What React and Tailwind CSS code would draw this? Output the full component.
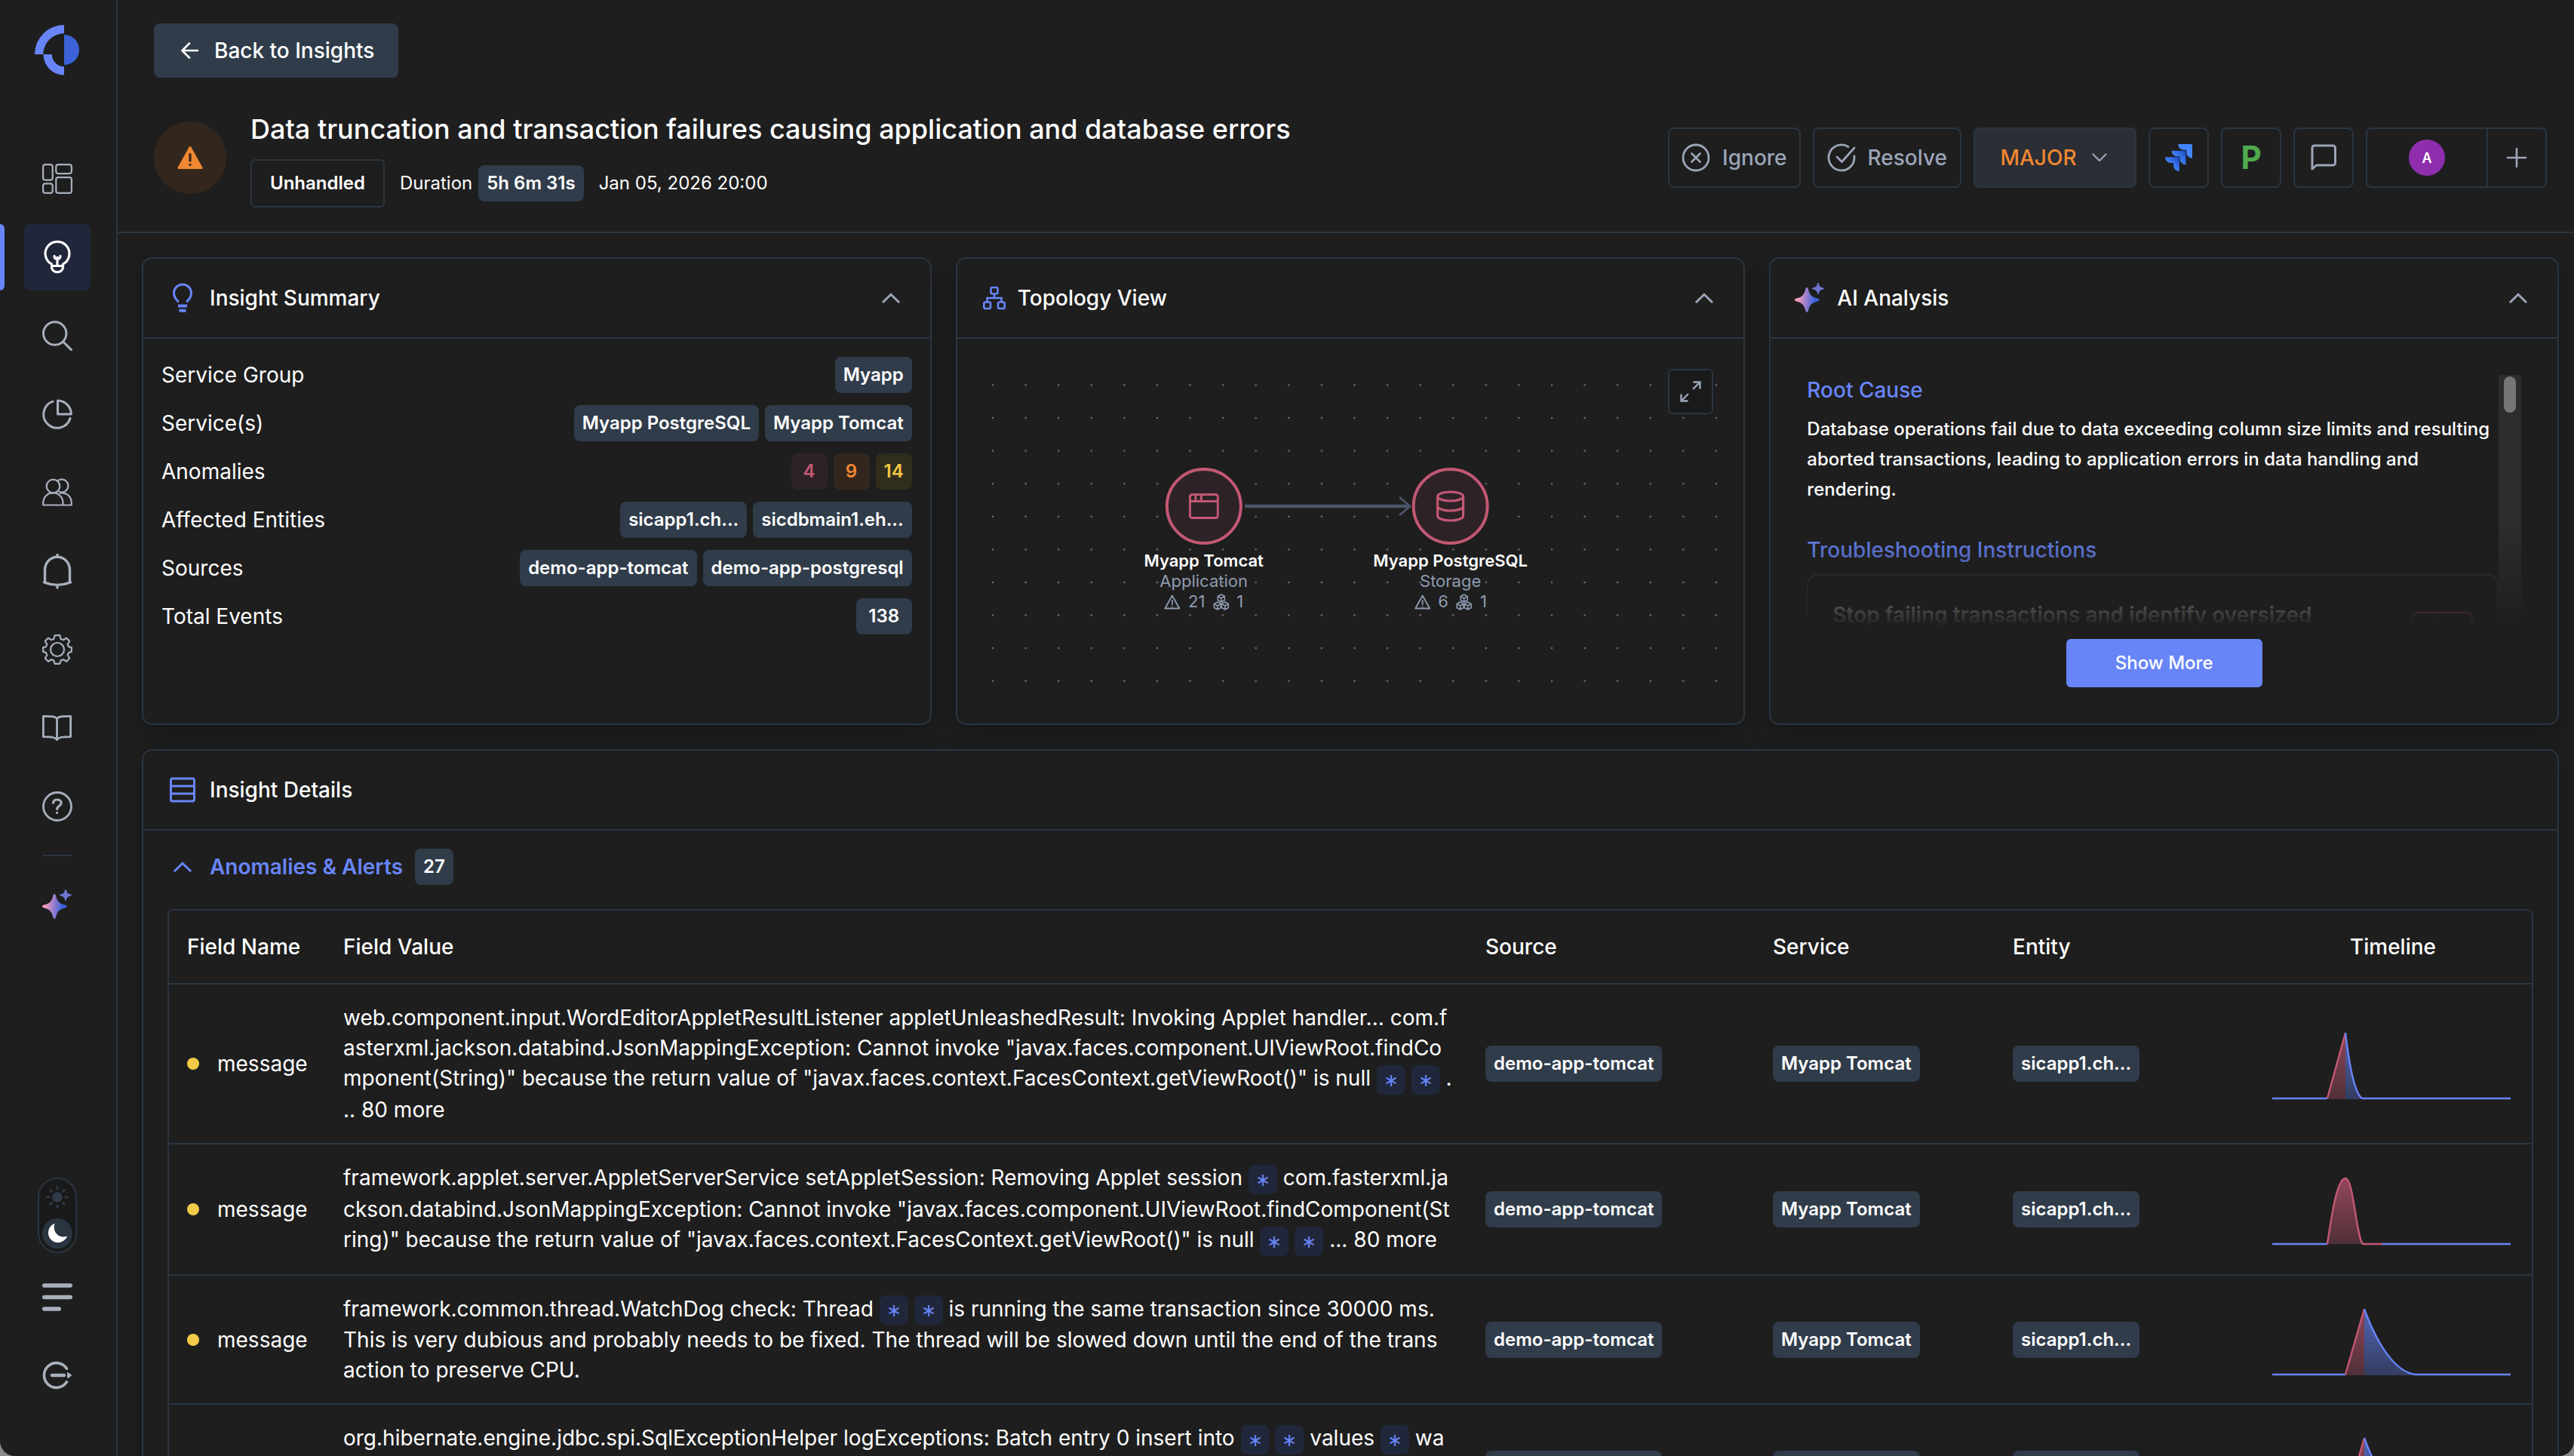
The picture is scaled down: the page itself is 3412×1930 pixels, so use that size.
import { Fragment, useState } from "react";
import clsx from "clsx";

const NAV_ICON = "size-10 shrink-0 fill-none stroke-current";

const SparkleIcon = ({ id, className }) => (
  <svg viewBox="0 0 40 40" className={className}>
    <defs>
      <linearGradient id={id} x1="0" y1="0.45" x2="1" y2="0.55">
        <stop offset="0.1" stopColor="#fb9dbb" />
        <stop offset="0.8" stopColor="#3d63de" />
      </linearGradient>
    </defs>
    <path
      fill={`url(#${id})`}
      d="M16.2 6c.9 0 1.4.7 1.8 2.2 1.6 7.2 4.500 10.500 12 12.400 1.700.4 2.700.9 2.700 1.900s-1 1.500-2.700 1.900c-7.500 1.900-10.400 5.200-12 12.400-.4 1.500-.9 2.200-1.800 2.200s-1.400-.7-1.800-2.200c-1.600-7.200-4.500-10.500-12-12.400-1.600-.4-2.400-.9-2.400-1.900s.8-1.500 2.400-1.900c7.500-1.900 10.400-5.200 12-12.400C14.800 6.700 15.300 6 16.200 6Z"
    />
    <path
      fill="#6f74d3"
      d="M31 0c.6 0 .9.500 1 1.200.8 3.200 1.800 4.200 5.500 5.200 1.200.3 1.700.6 1.700 1.100s-.5.8-1.700 1.100c-3.700 1-4.700 2-5.500 5.200-.1.700-.4 1.200-1 1.200s-.9-.5-1-1.200c-.8-3.200-1.800-4.200-5.500-5.200-1.200-.3-1.700-.6-1.700-1.100s.5-.8 1.700-1.100c3.700-1 4.700-2 5.500-5.200.1-.7.400-1.200 1-1.200Z"
    />
  </svg>
);

const Logo = () => (
  <svg viewBox="0 0 60 68" className="h-[68px] w-[60px]">
    <path d="M39 0v11.300A27.700 27.700 0 0 0 11.300 39H0A39 39 0 0 1 39 0Z" fill="#6885f8" />
    <path d="M11.500 39H22.800A16.200 16.200 0 0 0 39 55.200v11.300A27.500 27.500 0 0 1 11.500 39Z" fill="#6885f8" />
    <path d="M39 13a20 20 0 0 1 0 40Z" fill="#3b62d8" />
  </svg>
);

const navItems = [
  {
    label: "Dashboard",
    icon: (
      <svg viewBox="0 0 40 40" className={NAV_ICON} strokeWidth="2.2">
        <rect x="1.100" y="1.100" width="12.600" height="20.600" rx="3" />
        <rect x="18.300" y="1.100" width="20.600" height="12" rx="3" />
        <rect x="1.100" y="26.300" width="12.600" height="12.600" rx="3" />
        <rect x="18.300" y="18.100" width="20.600" height="20.800" rx="3" />
      </svg>
    ),
  },
  {
    label: "Insights",
    active: true,
    icon: (
      <svg viewBox="0 0 40 40" className={clsx(NAV_ICON, "overflow-visible")} strokeWidth="3.2" strokeLinecap="round" strokeLinejoin="round">
        <path d="M12.500 31.500v-2.300a15.900 15.900 0 1 1 15 0v2.300" />
        <path d="M12.500 31.500h15v1.800a7 6 0 0 1-15 0ZM20 31v-11M16 18.300c0 2.600 1.500 4 4 4s4-1.400 4-4" />
      </svg>
    ),
  },
  {
    label: "Search",
    icon: (
      <svg viewBox="0 0 40 40" className={NAV_ICON} strokeWidth="3" strokeLinecap="round">
        <circle cx="16.700" cy="17" r="15.200" />
        <path d="m27.800 28 10.600 10.600" />
      </svg>
    ),
  },
  {
    label: "Reports",
    icon: (
      <svg viewBox="0 0 40 40" className={NAV_ICON} strokeWidth="3" strokeLinecap="round" strokeLinejoin="round">
        <path d="M20.500 2v18h17.800A18 18 0 0 0 20.500 2Z" />
        <path d="M14 3.200A18 18 0 1 0 37 25.500" />
      </svg>
    ),
  },
  {
    label: "Users",
    icon: (
      <svg viewBox="0 0 40 40" className={NAV_ICON} strokeWidth="2.200" strokeLinejoin="round">
        <circle cx="14.500" cy="11.500" r="8.800" />
        <path d="M20 4.600a8.600 8.600 0 1 1 1.500 13.800M1.200 36.500V34c0-8 5.500-13.600 13.200-13.600S27.500 26 27.500 34v2.500ZM23 20.500c9.500-1 15.800 4.500 15.800 13.500v2.500H27.500" />
      </svg>
    ),
  },
  {
    label: "Alerts",
    icon: (
      <svg viewBox="0 0 40 40" className={clsx(NAV_ICON, "overflow-visible")} strokeWidth="3.400" strokeLinecap="round" strokeLinejoin="round">
        <path d="M20-1.500v2.500M20 40v2M3.500 34.700V18.500C3.500 9 10.500 1.300 20 1.300S36.500 9 36.500 18.500v16.200M2.500 34.900c11 4.400 24 4.400 35 0" />
      </svg>
    ),
  },
  {
    label: "Settings",
    icon: (
      <svg viewBox="0 0 40 40" className={NAV_ICON} strokeWidth="2.200" strokeLinejoin="round">
        <circle cx="20" cy="20" r="9" />
        <path d="M16.600 1.200h6.800l1.200 4.700 3.300 1.400 4.200-2.500 4.100 4.100-2.500 4.200 1.400 3.300 3.700.6v6l-3.700 1.100-1.400 3.200 2.500 4.200-4.100 4.300-4.200-2.600-3.300 1.400-1.200 4.200h-6.800l-1.200-4.200-3.300-1.400-4.200 2.600-4.100-4.300 2.500-4.200-1.400-3.200-3.700-1.100v-6l3.700-.6 1.400-3.300-2.500-4.200 4.100-4.100 4.200 2.500 3.300-1.400Z" />
      </svg>
    ),
  },
  {
    label: "Docs",
    icon: (
      <svg viewBox="0 0 40 40" className={NAV_ICON} strokeWidth="2.800" strokeLinejoin="round">
        <path d="M19.500 7.500C17 5 13.500 4.300 1.400 4.400v27.200c11 0 15.600.4 18.100 4 2.500-3.600 7-4 18.100-4V4.400C25.500 4.300 22 5 19.500 7.500ZM19.500 7.500v28" />
      </svg>
    ),
  },
  {
    label: "Help",
    icon: (
      <svg viewBox="0 0 40 40" className={NAV_ICON} strokeWidth="2.800" strokeLinecap="round">
        <circle cx="20" cy="20" r="18.500" />
        <path d="M14.500 15.200c.4-2.700 2.400-4.200 5.300-4.200 3.200 0 5.400 1.800 5.400 4.400 0 3.600-5.600 4.200-5.600 8.100M19.600 28.300v.2" strokeWidth="3.200" />
      </svg>
    ),
  },
];

const NavButton = ({ label, active, children }) => (
  <button
    aria-label={label}
    className={clsx(
      "flex size-[88px] items-center justify-center rounded-lg",
      active ? "bg-[#20273a] text-white" : "text-[#a8b0bd]"
    )}
  >
    {children}
  </button>
);

const ThemeToggle = () => {
  const [dark, setDark] = useState(true);
  return (
    <button
      role="switch"
      aria-checked={dark}
      aria-label="Dark theme"
      onClick={() => setDark((prev) => !prev)}
      className="flex h-[100px] w-[52px] flex-col items-center justify-between rounded-full border-2 border-[#2a3541] bg-[#191919] py-1"
    >
      <span className="flex size-10 items-center justify-center">
        <svg viewBox="0 0 30 30" className="size-[30px] text-[#303c4a]" stroke="currentColor" strokeWidth="2.600" strokeLinecap="round">
          <circle cx="15" cy="15" r="5.500" fill="currentColor" />
          <path d="M15 1.300v3M15 25.700v3M1.300 15h3M25.700 15h3M5.300 5.300l2.200 2.200M22.500 22.500l2.200 2.200M24.700 5.300l-2.200 2.200M7.500 22.500l-2.200 2.200" />
        </svg>
      </span>
      <span className="flex size-10 items-center justify-center rounded-full bg-[#2a3541]">
        <svg viewBox="0 0 26 26" className="size-[26px] fill-white">
          <path d="M9.500.5C8 4 8.500 9.500 12 13.500c3.500 3.800 8.500 5 13.200 3.200.6-.2.8.200.6.800A13 13 0 1 1 8.700.2c.6-.3 1-.2.8.3Z" />
        </svg>
      </span>
    </button>
  );
};

const Sidebar = () => (
  <nav className="relative flex w-[156px] shrink-0 flex-col border-r-2 border-[#2a3541] pl-8">
    <div className="ml-3.5 mt-[33px]">
      <Logo />
    </div>
    <div className="mt-23 flex flex-col gap-4">
      {navItems.map((item) => (
        <div key={item.label} className="relative">
          {item.active && <span className="absolute inset-y-0 -left-8 w-1.5 rounded-r-lg bg-[#6885f8]" />}
          <NavButton label={item.label} active={item.active}>
            {item.icon}
          </NavButton>
        </div>
      ))}
    </div>
    <hr className="ml-6 mt-5 w-10 border-t-2 border-[#2a3541]" />
    <div className="mt-5">
      <NavButton label="AI assistant">
        <SparkleIcon id="nav-sparkle" className="size-10" />
      </NavButton>
    </div>
    <div className="mt-auto pb-[63px]">
      <div className="flex w-[88px] flex-col items-center gap-[15px]">
        <ThemeToggle />
        <NavButton label="Expand menu">
          <svg viewBox="0 0 40 40" className={NAV_ICON} strokeWidth="5.600" strokeLinecap="round">
            <path d="M2.800 4h34.400M2.800 19.500h34.400M2.800 35h19.400" />
          </svg>
        </NavButton>
        <NavButton label="Log out">
          <svg viewBox="0 0 40 40" className={NAV_ICON} strokeWidth="3.600" strokeLinecap="round">
            <path d="M32.500 11.200A16.300 16.300 0 1 0 32.500 28.800" />
            <path d="M13 20h16" strokeWidth="4.600" />
            <path d="m34 17 4 3-4 3Z" fill="currentColor" strokeWidth="2" strokeLinejoin="round" />
          </svg>
        </NavButton>
      </div>
    </div>
  </nav>
);

const Badge = ({ children, className = "bg-[#303c4a] text-white" }) => (
  <span
    className={clsx(
      "inline-flex h-12 min-w-12 items-center justify-center whitespace-nowrap rounded-lg px-[11px] text-[24px] font-semibold",
      className
    )}
  >
    {children}
  </span>
);

const Chevron = ({ className }) => (
  <svg viewBox="0 0 24 14" className={clsx("h-[14px] w-6 fill-none stroke-current", className)} strokeWidth="3" strokeLinecap="round" strokeLinejoin="round">
    <path d="m1.800 12.200 10.200-10 10.200 10" />
  </svg>
);

const HEADER_BUTTON = "flex h-20 items-center justify-center rounded-lg border-2 border-[#2a3541]";

const Header = () => (
  <header className="border-b-2 border-[#2a3541] pb-8 pl-12 pr-9 pt-[31px]">
    <button className="flex h-[72px] items-center gap-5 rounded-lg bg-[#303c4a] pl-[34px] pr-8 text-[28px] font-medium">
      <svg viewBox="0 0 26 24" className="h-6 w-[26px] fill-none stroke-current" strokeWidth="2.600" strokeLinecap="round" strokeLinejoin="round">
        <path d="M24 12H4M13 2.500 3.500 12l9.500 9.500" />
      </svg>
      Back to Insights
    </button>
    <div className="mt-10 flex items-center justify-between">
      <div className="flex items-center gap-8">
        <span className="flex size-24 items-center justify-center rounded-full bg-[#33271d]">
          <svg viewBox="0 0 34 32" className="h-8 w-[34px]">
            <path d="M17 2.500 32 29.500H2Z" fill="#f08732" stroke="#f08732" strokeWidth="3" strokeLinejoin="round" />
            <path d="M17 11.500v8.500M17 25.200v.2" stroke="#33271d" strokeWidth="3.200" strokeLinecap="round" />
          </svg>
        </span>
        <div className="flex flex-col gap-3">
          <h1 className="text-[36px] font-medium leading-[56px]">
            Data truncation and transaction failures causing application and database errors
          </h1>
          <div className="flex items-center gap-5 text-[24px]">
            <span className="flex h-16 items-center rounded-md border-2 border-[#2a3541] px-6 font-semibold">Unhandled</span>
            <span className="flex items-center gap-2">
              Duration
              <Badge>5h 6m 31s</Badge>
            </span>
            <span>Jan 05, 2026 20:00</span>
          </div>
        </div>
      </div>
      <div className="flex items-center gap-4 text-[28px] font-medium text-[#9ba5b7]">
        <button className={clsx(HEADER_BUTTON, "gap-4 px-4")}>
          <svg viewBox="0 0 38 38" className="size-[38px] fill-none stroke-current" strokeWidth="2.800" strokeLinecap="round">
            <circle cx="19" cy="19" r="17" />
            <path d="m13.500 13.500 11 11M24.500 13.500l-11 11" />
          </svg>
          Ignore
        </button>
        <button className={clsx(HEADER_BUTTON, "gap-4 px-[17px]")}>
          <svg viewBox="0 0 38 38" className="size-[38px] fill-none stroke-current" strokeWidth="2.800" strokeLinecap="round" strokeLinejoin="round">
            <path d="M28 4.500A17 17 0 1 0 36 19v-2" />
            <path d="m13 18 6.500 6.500L36 6" />
          </svg>
          Resolve
        </button>
        <button className={clsx(HEADER_BUTTON, "w-[216px] gap-5 bg-[#2b2e34] pr-1 text-[#f08732]")}>
          MAJOR
          <svg viewBox="0 0 20 12" className="h-3 w-5 fill-none stroke-[#9ba5b7]" strokeWidth="2.200" strokeLinecap="round" strokeLinejoin="round">
            <path d="m1.500 1.500 8.500 8.500 8.500-8.500" />
          </svg>
        </button>
        <button aria-label="Jira" className={clsx(HEADER_BUTTON, "w-20")}>
          <svg viewBox="0 0 24 24" className="size-9">
            <defs>
              <linearGradient id="jira-shade" x1="0.95" y1="0.1" x2="0.4" y2="0.6">
                <stop offset="0" stopColor="#1e50c8" />
                <stop offset="1" stopColor="#4385fb" />
              </linearGradient>
            </defs>
            <path fill="#4385fb" d="M23.013 0H11.455a5.215 5.215 0 0 0 5.215 5.215h2.129v2.057A5.215 5.215 0 0 0 24 12.483V1.005A1.001 1.001 0 0 0 23.013 0Z" />
            <path fill="url(#jira-shade)" d="M17.294 5.757H5.736a5.215 5.215 0 0 0 5.215 5.214h2.129v2.058a5.218 5.218 0 0 0 5.215 5.214V6.758a1.001 1.001 0 0 0-1.001-1.001Z" />
            <path fill="url(#jira-shade)" d="M11.571 11.513H0a5.218 5.218 0 0 0 5.232 5.215h2.130v2.057A5.215 5.215 0 0 0 12.575 24V12.518a1.005 1.005 0 0 0-1.004-1.005Z" />
          </svg>
        </button>
        <button aria-label="PagerDuty" className={clsx(HEADER_BUTTON, "w-20 text-[42px] font-bold leading-none text-[#4faa4b]")}>
          P
        </button>
        <button aria-label="Comments" className={clsx(HEADER_BUTTON, "w-20")}>
          <svg viewBox="0 0 36 36" className="size-9 fill-none stroke-current" strokeWidth="3" strokeLinejoin="round">
            <path d="M3 33V5a3 3 0 0 1 3-3h24.500a3 3 0 0 1 3 3v20a3 3 0 0 1-3 3H8.500Z" />
          </svg>
        </button>
        <div className="flex h-20 w-[240px] rounded-lg border-2 border-[#2a3541]">
          <button aria-label="Assignee" className="flex flex-1 items-center justify-center">
            <span className="flex size-12 items-center justify-center rounded-full bg-[#8e2ead] text-[18px] font-semibold text-white">A</span>
          </button>
          <button aria-label="Add assignee" className="flex w-[78px] items-center justify-center border-l-2 border-[#2a3541]">
            <svg viewBox="0 0 28 28" className="size-7 fill-none stroke-current" strokeWidth="2.600" strokeLinecap="round">
              <path d="M14 2v24M2 14h24" />
            </svg>
          </button>
        </div>
      </div>
    </div>
  </header>
);

const Card = ({ icon, title, collapsible = true, className, children }) => (
  <section className={clsx("flex min-w-0 flex-col border-2 border-[#2a3541] bg-[#1e1e1e] shadow-[0_12px_28px_rgba(0,0,0,0.22)]", className)}>
    <div className="flex h-[106px] items-center gap-[18px] border-b-2 border-[#2a3541] pl-[34px] pr-10">
      {icon}
      <h2 className="flex-1 text-[28px] font-medium">{title}</h2>
      {collapsible && (
        <button aria-label={`Collapse ${title}`} className="text-[#9ba5b7]">
          <Chevron />
        </button>
      )}
    </div>
    {children}
  </section>
);

const summaryRows = [
  { label: "Service Group", badges: ["Myapp"] },
  { label: "Service(s)", badges: ["Myapp PostgreSQL", "Myapp Tomcat"] },
  {
    label: "Anomalies",
    badges: ["4", "9", "14"],
    tones: ["bg-[#2d2327] text-[#c35874]", "bg-[#33271d] text-[#f08732]", "bg-[#302d1d] text-[#f2c744]"],
  },
  { label: "Affected Entities", badges: ["sicapp1.ch...", "sicdbmain1.eh..."] },
  { label: "Sources", badges: ["demo-app-tomcat", "demo-app-postgresql"] },
  { label: "Total Events", badges: ["138"], tones: ["bg-[#303c4a] text-white min-w-[74px]"] },
];

const InsightSummary = () => (
  <Card
    className="rounded-[14px]"
    title="Insight Summary"
    icon={
      <svg viewBox="0 0 36 40" className="h-10 w-9 fill-none stroke-[#6885f8]" strokeWidth="3" strokeLinecap="round">
        <path d="M12 24.500C7 19.500 6.500 17 6.500 13.500a11.500 11.500 0 0 1 23 0c0 3.500-.5 6-5.500 11" />
        <path d="M12 30.500h12M13.500 36.800h9" strokeWidth="4" strokeLinecap="butt" />
      </svg>
    }
  >
    <dl className="flex flex-col gap-4 p-6">
      {summaryRows.map(({ label, badges, tones }) => (
        <div key={label} className="flex h-12 items-center justify-between text-[28px]">
          <dt>{label}</dt>
          <dd className="flex gap-2">
            {badges.map((badge, i) => (
              <Badge key={badge} className={tones?.[i]}>
                {badge}
              </Badge>
            ))}
          </dd>
        </div>
      ))}
    </dl>
  </Card>
);

const TopologyNode = ({ name, kind, alerts, clusters, className, children }) => (
  <div className={clsx("absolute top-[147px] flex -translate-x-1/2 flex-col items-center text-[22px] leading-[27px] text-[#8f9bb0]", className)}>
    <span className="mb-2 flex size-[102px] items-center justify-center rounded-full border-4 border-[#c35874] bg-[#2d2327] text-[#c35874]">
      {children}
    </span>
    <span className="whitespace-nowrap font-semibold text-white">{name}</span>
    <span>{kind}</span>
    <span className="flex items-center gap-2.5">
      <svg viewBox="0 0 22 20" className="h-5 w-[22px] fill-none stroke-current" strokeWidth="1.800" strokeLinecap="round" strokeLinejoin="round">
        <path d="M11 1.500 20.500 18.500h-19ZM11 8v5M11 15.800v.1" />
      </svg>
      {alerts}
      <svg viewBox="0 0 22 22" className="size-[22px] fill-none stroke-current" strokeWidth="1.600" strokeLinejoin="round">
        <path d="m11 1 4.500 2.500v5L11 11 6.500 8.500v-5ZM6.500 3.500 11 6l4.500-2.500M11 6v5" />
        <path d="m6 11 4.500 2.500v5L6 21l-4.500-2.500v-5ZM1.500 13.500 6 16l4.500-2.500M6 16v5" />
        <path d="m16 11 4.500 2.500v5L16 21l-4.500-2.500v-5ZM11.500 13.500 16 16l4.500-2.500M16 16v5" />
      </svg>
      {clusters}
    </span>
  </div>
);

const TopologyView = () => (
  <Card
    className="rounded-[14px]"
    title="Topology View"
    icon={
      <svg viewBox="1 0 30 32" className="-mr-0.5 h-8 w-[30px] fill-none stroke-[#6885f8]" strokeWidth="2.600">
        <rect x="11.500" y="2" width="9" height="8.500" rx="2" />
        <rect x="2.300" y="21.500" width="8.700" height="8.500" rx="2" />
        <rect x="21" y="21.500" width="8.700" height="8.500" rx="2" />
        <path d="M16 10.500V16M6.500 21.500V16h19v5.500" />
      </svg>
    }
  >
    <div className="relative m-6 flex-1">
      <svg className="absolute inset-0 size-full">
        <defs>
          <pattern id="topology-dots" x="1.200" y="15.600" width="43.590" height="43.590" patternUnits="userSpaceOnUse">
            <circle cx="21.800" cy="21.800" r="1.300" fill="#707070" />
          </pattern>
        </defs>
        <rect width="100%" height="100%" fill="url(#topology-dots)" />
        <g className="fill-none stroke-[#4b5569]">
          <path d="M357 198h218" strokeWidth="4.500" />
          <path d="m562 186 14 12-14 12" strokeWidth="2.800" />
        </g>
      </svg>
      <TopologyNode name="Myapp Tomcat" kind="Application" alerts="21" clusters="1" className="left-[303px]">
        <svg viewBox="0 0 40 34" className="h-[34px] w-10 fill-none stroke-current" strokeWidth="3">
          <rect x="1.500" y="1.500" width="37" height="31" rx="3" />
          <path d="M1.500 10.500h37M9 1.500v9M16.500 1.500v9" />
        </svg>
      </TopologyNode>
      <TopologyNode name="Myapp PostgreSQL" kind="Storage" alerts="6" clusters="1" className="left-[630px]">
        <svg viewBox="0 0 38 42" className="h-[42px] w-[38px] fill-none stroke-current" strokeWidth="3.200">
          <ellipse cx="19" cy="8" rx="17" ry="6" />
          <path d="M2 8v26c0 3.300 7.600 6 17 6s17-2.700 17-6V8M2 21c0 3.300 7.600 6 17 6s17-2.700 17-6" />
        </svg>
      </TopologyNode>
      <button
        aria-label="Expand topology"
        className="absolute right-4 top-4 flex size-[60px] items-center justify-center rounded-md border-2 border-[#2a3541] bg-[#1a1a1a] text-[#9ba5b7]"
      >
        <svg viewBox="0 0 28 28" className="size-7 fill-none stroke-current" strokeWidth="2.400">
          <path d="M17 11 26 2M17.500 1.500h9v9M11 17l-9 9M1.500 17.500v9h9" />
        </svg>
      </button>
    </div>
  </Card>
);

const AiAnalysis = () => (
  <Card className="rounded-[14px]" title="AI Analysis" icon={<SparkleIcon id="card-sparkle" className="-ml-0.5 -mr-0.5 size-10" />}>
    <div className="flex flex-1 flex-col items-center p-12">
      <div className="relative flex h-[334px] w-full overflow-hidden">
        <div className="min-w-0 flex-1">
          <h3 className="text-[28px] font-medium leading-10 text-[#6885f8]">Root Cause</h3>
          <p className="mt-3 text-[24px] font-medium leading-10">
            Database operations fail due to data exceeding column size limits and resulting aborted transactions, leading
            to application errors in data handling and rendering.
          </p>
          <h3 className="mt-10 text-[28px] font-medium leading-10 text-[#6885f8]">Troubleshooting Instructions</h3>
          <div className="mt-3 flex items-center justify-between gap-12 rounded-[14px] border-2 border-[#2a3541] p-8">
            <h4 className="text-[28px] font-semibold leading-10">
              Stop failing transactions and identify oversized payloads
            </h4>
            <span className="flex h-12 items-center rounded-lg border-2 border-[#e0567a] px-3 text-[24px] text-[#e0567a]">High</span>
          </div>
        </div>
        <div className="h-full w-[30px] bg-[#2c2c2c] px-[7px] py-0.5">
          <div className="h-12 rounded-full bg-[#757575]" />
        </div>
        <div className="absolute inset-x-0 bottom-0 h-32 bg-linear-to-b from-transparent to-[#1e1e1e]" />
      </div>
      <button className="mt-4 h-16 w-[260px] rounded-md bg-[#6885f8] text-[24px] font-medium">Show More</button>
    </div>
  </Card>
);

// "*" marks a value that varies between occurrences of the same log message
const anomalies = [
  {
    value:
      'web.component.input.WordEditorAppletResultListener appletUnleashedResult: Invoking Applet handler... com.fasterxml.jackson.databind.JsonMappingException: Cannot invoke "javax.faces.component.UIViewRoot.findComponent(String)" because the return value of "javax.faces.context.FacesContext.getViewRoot()" is null * * .\n.. 80 more',
    chart: "spike",
  },
  {
    value:
      'framework.applet.server.AppletServerService setAppletSession: Removing Applet session * com.fasterxml.jackson.databind.JsonMappingException: Cannot invoke "javax.faces.component.UIViewRoot.findComponent(String)" because the return value of "javax.faces.context.FacesContext.getViewRoot()" is null * * ... 80 more',
    chart: "bump",
  },
  {
    value:
      "framework.common.thread.WatchDog check: Thread * * is running the same transaction since 30000 ms.\nThis is very dubious and probably needs to be fixed. The thread will be slowed down until the end of the trans\naction to preserve CPU.",
    chart: "decay",
  },
  {
    value:
      "org.hibernate.engine.jdbc.spi.SqlExceptionHelper logExceptions: Batch entry 0 insert into * * values * wa\ns aborted: ERROR: value too long for type character varying. Call getNextException to see other errors in the batch.",
    chart: "decay",
  },
];

const charts = {
  spike: {
    red: "M73 95 97 8",
    blue: "M97 8C102 50 109 88 119 95",
    redArea: "M73 95 97 8V96H73Z",
    blueArea: "M97 8C102 50 109 88 119 95V96H97Z",
    flat: "M0 95H73M119 95H316",
  },
  bump: {
    red: "M73 95C79 55 86 8 97 8S111 85 120 95H146",
    redArea: "M73 95C79 55 86 8 97 8S111 85 120 95Z",
    flat: "M0 95H73M146 95H316",
  },
  decay: {
    red: "M97 95 122 8",
    blue: "M122 8C138 52 162 92 190 95",
    redArea: "M97 95 122 8V96H97Z",
    blueArea: "M122 8C138 52 162 92 190 95V96H122Z",
    flat: "M0 95H97M190 95H316",
  },
};

const Sparkline = ({ type, id }) => {
  const chart = charts[type];
  return (
    <svg viewBox="0 0 316 98" className="block w-[316px] fill-none" strokeWidth="2.400">
      <defs>
        <linearGradient id={`${id}-red`} x1="0" y1="0" x2="0" y2="1">
          <stop offset="0" stopColor="#c35874" stopOpacity="0.7" />
          <stop offset="1" stopColor="#c35874" stopOpacity="0.3" />
        </linearGradient>
        <linearGradient id={`${id}-blue`} x1="0" y1="0" x2="0" y2="1">
          <stop offset="0" stopColor="#6885f8" stopOpacity="0.7" />
          <stop offset="1" stopColor="#6885f8" stopOpacity="0.3" />
        </linearGradient>
      </defs>
      <path d={chart.redArea} fill={`url(#${id}-red)`} />
      {chart.blueArea && <path d={chart.blueArea} fill={`url(#${id}-blue)`} />}
      <path d={chart.flat} stroke="#6885f8" />
      <path d={chart.red} stroke="#c35874" />
      {chart.blue && <path d={chart.blue} stroke="#6885f8" />}
    </svg>
  );
};

const FieldValue = ({ text }) =>
  text.split("*").map((part, i) => (
    <Fragment key={i}>
      {i > 0 && (
        <span className="inline-block h-[39px] w-[38px] rounded-lg bg-[#20273a] text-center align-middle text-[24px] text-[#6885f8]">
          ∗
        </span>
      )}
      {part}
    </Fragment>
  ));

const TH = "h-24 px-6 text-left font-medium";
const TD = "border-t-2 border-[#2a3541] pl-6";

const InsightDetails = () => (
  <Card
    className="mt-8 rounded-t-[14px]"
    title="Insight Details"
    collapsible={false}
    icon={
      <svg viewBox="0 0 36 36" className="size-9 fill-none stroke-[#6885f8]" strokeWidth="3">
        <rect x="2.500" y="3" width="31" height="30" rx="2.500" />
        <path d="M2.500 13h31M2.500 23h31" />
      </svg>
    }
  >
    <div className="px-8 pb-8 pt-6">
      <button className="flex h-12 items-center gap-4 pl-2 text-[28px] font-semibold text-[#6885f8]">
        <Chevron className="mr-2" />
        Anomalies & Alerts
        <Badge>27</Badge>
      </button>
      <div className="mt-8 rounded-lg border-2 border-[#2a3541]">
        <table className="w-full table-fixed border-separate border-spacing-0 text-[28px] leading-10">
          <colgroup>
            <col className="w-[207px]" />
            <col />
            <col className="w-[381px]" />
            <col className="w-[318px]" />
            <col className="w-[344px]" />
            <col className="w-[368px]" />
          </colgroup>
          <thead>
            <tr>
              <th className={TH}>Field Name</th>
              <th className={TH}>Field Value</th>
              <th className={TH}>Source</th>
              <th className={TH}>Service</th>
              <th className={TH}>Entity</th>
              <th className="h-24 px-6 text-center font-medium">Timeline</th>
            </tr>
          </thead>
          <tbody>
            {anomalies.map(({ value, chart }, i) => (
              <tr key={i}>
                <td className={TD}>
                  <span className="flex items-center gap-6">
                    <span className="size-4 shrink-0 rounded-full bg-[#f2cc48]" />
                    message
                  </span>
                </td>
                <td className={clsx(TD, "whitespace-pre-line break-all py-6 pr-4")}>
                  <FieldValue text={value} />
                </td>
                <td className={TD}>
                  <Badge>demo-app-tomcat</Badge>
                </td>
                <td className={TD}>
                  <Badge>Myapp Tomcat</Badge>
                </td>
                <td className={TD}>
                  <Badge>sicapp1.ch...</Badge>
                </td>
                <td className={TD}>
                  <Sparkline type={chart} id={`chart-${i}`} />
                </td>
              </tr>
            ))}
          </tbody>
        </table>
      </div>
    </div>
  </Card>
);

const App = () => (
  <div className="h-screen overflow-hidden bg-[#8a8a8a]">
    <div className="flex h-full overflow-hidden rounded-b-[20px] bg-[#1e1e1e] font-['Inter',sans-serif] text-white">
      <Sidebar />
      <div className="min-w-0 flex-1">
        <Header />
        <main className="pl-8 pr-5 pt-8">
          <div className="grid grid-cols-3 gap-8">
            <InsightSummary />
            <TopologyView />
            <AiAnalysis />
          </div>
          <InsightDetails />
        </main>
      </div>
    </div>
  </div>
);

export default App;
